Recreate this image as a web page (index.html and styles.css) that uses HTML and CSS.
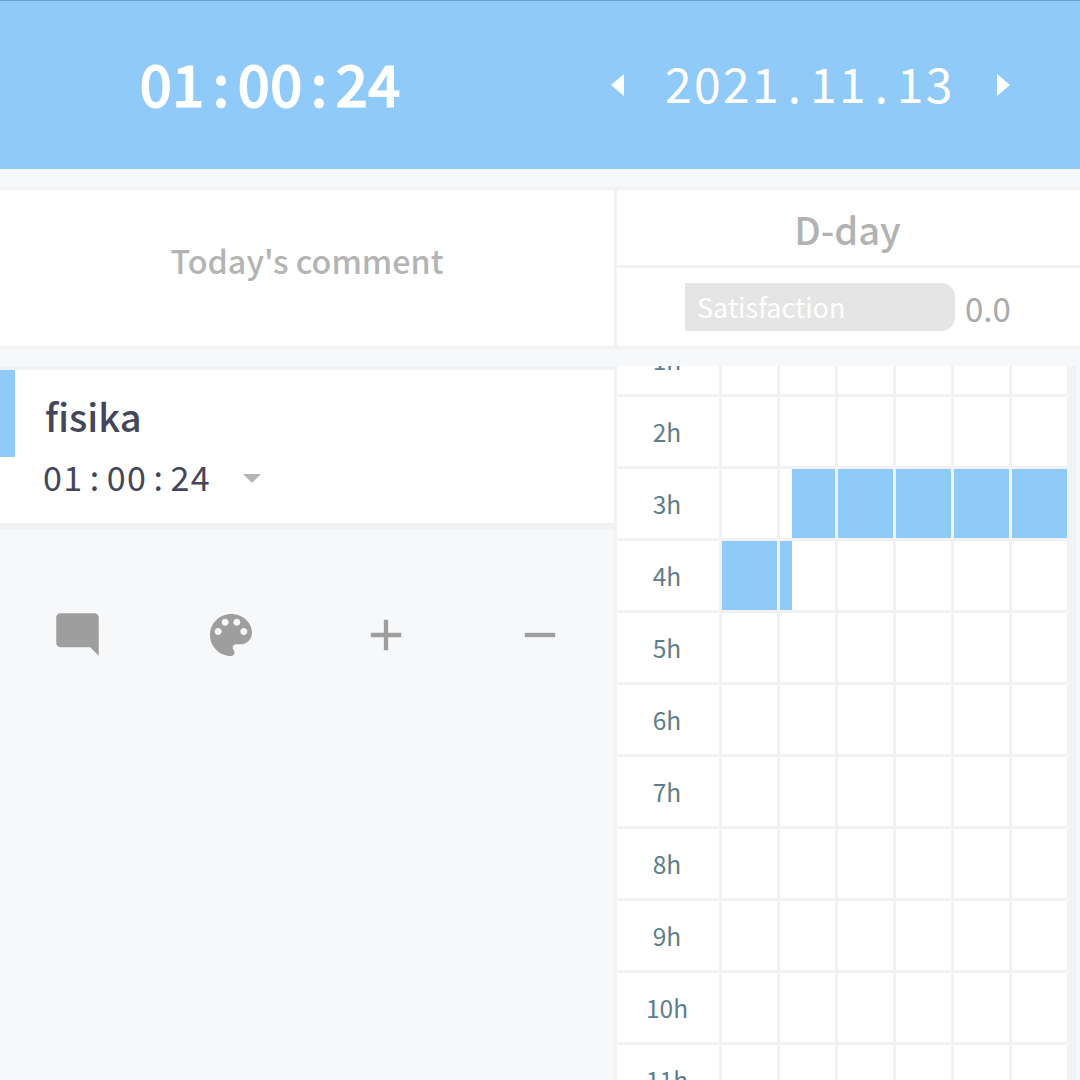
FILE: index.html
```html
<!DOCTYPE html>
<html lang="en">
<head>
    <meta charset="UTF-8">
    <meta name="viewport" content="width=device-width, initial-scale=1.0">
    <title>Study Timer</title>
    <link rel="stylesheet" href="styles.css">
</head>
<body>
    <header class="top-bar">
        <div class="total-time">01<span class="time-sep">:</span>00<span class="time-sep">:</span>24</div>
        <div class="date-nav">
            <span class="arrow arrow-left"></span>
            <span class="date-text">2021<span class="date-sep">.</span>11<span class="date-sep">.</span>13</span>
            <span class="arrow arrow-right"></span>
        </div>
    </header>

    <main class="content">
        <section class="left-col">
            <div class="comment-box">Today's comment</div>

            <div class="subject-card">
                <span class="subject-color"></span>
                <div class="subject-name">fisika</div>
                <div class="subject-row">
                    <span class="subject-time">01<span class="subject-sep">:</span>00<span class="subject-sep">:</span>24</span>
                    <span class="caret"></span>
                </div>
            </div>

            <div class="tools">
                <button class="tool bubble">
                    <svg viewBox="0 0 24 24" width="51" height="51"><path d="M21.99 4c0-1.1-.89-2-1.99-2H4c-1.1 0-2 .9-2 2v12c0 1.1.9 2 2 2h14l4 4-.01-18z"/></svg>
                </button>
                <button class="tool palette">
                    <svg viewBox="0 0 24 24" width="56" height="56"><path d="M12 3c-4.97 0-9 4.03-9 9s4.03 9 9 9c.83 0 1.5-.67 1.5-1.5 0-.39-.15-.74-.39-1.01-.24-.27-.39-.62-.39-.99 0-.83.67-1.5 1.5-1.5H16c2.76 0 5-2.24 5-5 0-4.42-4.03-8-9-8zm-5.5 9c-.83 0-1.5-.67-1.5-1.5S5.67 9 6.5 9 8 9.67 8 10.5 7.33 12 6.5 12zm3-4C8.67 8 8 7.33 8 6.5S8.67 5 9.5 5s1.5.67 1.5 1.5S10.33 8 9.5 8zm5 0c-.83 0-1.5-.67-1.5-1.5S13.67 5 14.5 5s1.5.67 1.5 1.5S15.33 8 14.5 8zm3 4c-.83 0-1.5-.67-1.5-1.5S16.67 9 17.5 9s1.5.67 1.5 1.5-.67 1.5-1.5 1.5z"/></svg>
                </button>
                <button class="tool">
                    <svg viewBox="0 0 24 24" width="52" height="52"><path d="M19 13h-6v6h-2v-6H5v-2h6V5h2v6h6v2z"/></svg>
                </button>
                <button class="tool">
                    <svg viewBox="0 0 24 24" width="52" height="52"><path d="M19 13H5v-2h14v2z"/></svg>
                </button>
            </div>
        </section>

        <section class="right-col">
            <div class="info-box">
                <div class="dday">D-day</div>
                <div class="satisfaction">
                    <div class="satisfaction-bar">Satisfaction</div>
                    <span class="satisfaction-value">0.0</span>
                </div>
            </div>

            <div class="timetable">
                <div class="timetable-inner">
                    <div class="hour-row"><div class="hour">1h</div><div class="cell"></div><div class="cell"></div><div class="cell"></div><div class="cell"></div><div class="cell"></div><div class="cell"></div></div>
                    <div class="hour-row"><div class="hour">2h</div><div class="cell"></div><div class="cell"></div><div class="cell"></div><div class="cell"></div><div class="cell"></div><div class="cell"></div></div>
                    <div class="hour-row">
                        <div class="hour">3h</div>
                        <div class="cell"></div>
                        <div class="cell cell-end"><span class="fill" style="width: 43px"></span></div>
                        <div class="cell"><span class="fill" style="width: 55px"></span></div>
                        <div class="cell"><span class="fill" style="width: 55px"></span></div>
                        <div class="cell"><span class="fill" style="width: 55px"></span></div>
                        <div class="cell"><span class="fill" style="width: 55px"></span></div>
                    </div>
                    <div class="hour-row">
                        <div class="hour">4h</div>
                        <div class="cell"><span class="fill" style="width: 55px"></span></div>
                        <div class="cell"><span class="fill" style="width: 12px"></span></div>
                        <div class="cell"></div>
                        <div class="cell"></div>
                        <div class="cell"></div>
                        <div class="cell"></div>
                    </div>
                    <div class="hour-row"><div class="hour">5h</div><div class="cell"></div><div class="cell"></div><div class="cell"></div><div class="cell"></div><div class="cell"></div><div class="cell"></div></div>
                    <div class="hour-row"><div class="hour">6h</div><div class="cell"></div><div class="cell"></div><div class="cell"></div><div class="cell"></div><div class="cell"></div><div class="cell"></div></div>
                    <div class="hour-row"><div class="hour">7h</div><div class="cell"></div><div class="cell"></div><div class="cell"></div><div class="cell"></div><div class="cell"></div><div class="cell"></div></div>
                    <div class="hour-row"><div class="hour">8h</div><div class="cell"></div><div class="cell"></div><div class="cell"></div><div class="cell"></div><div class="cell"></div><div class="cell"></div></div>
                    <div class="hour-row"><div class="hour">9h</div><div class="cell"></div><div class="cell"></div><div class="cell"></div><div class="cell"></div><div class="cell"></div><div class="cell"></div></div>
                    <div class="hour-row"><div class="hour">10h</div><div class="cell"></div><div class="cell"></div><div class="cell"></div><div class="cell"></div><div class="cell"></div><div class="cell"></div></div>
                    <div class="hour-row"><div class="hour">11h</div><div class="cell"></div><div class="cell"></div><div class="cell"></div><div class="cell"></div><div class="cell"></div><div class="cell"></div></div>
                </div>
            </div>
        </section>
    </main>
</body>
</html>
```

FILE: styles.css
```css
html, body {
    height: 100%;
}
body {
    margin: 0;
    height: 1080px;
    overflow: hidden;
    background-color: #f7f8fa;
    font-family: "Noto Sans CJK KR", "Noto Sans", sans-serif;
}
.top-bar {
    display: flex;
    height: 168px;
    align-items: center;
    background-color: #90caf9;
    border-top: 1px solid #6a9fd0;
    color: #ffffff;
}
.total-time {
    width: 540px;
    margin-top: -6px;
    text-align: center;
    font-size: 57px;
    font-weight: 500;
    line-height: 1;
    -webkit-text-stroke: 1px #ffffff;
}
.time-sep {
    margin: 0 8px;
}
.date-nav {
    display: flex;
    flex: 1;
    align-items: center;
    padding-left: 71px;
}
.date-text {
    margin: -7px 42px 0 41px;
    font-size: 48px;
    font-weight: 400;
    line-height: 1;
    letter-spacing: 2.4px;
}
.date-sep {
    margin: 0 6.5px;
}
.arrow {
    width: 0;
    height: 0;
    border-top: 11px solid transparent;
    border-bottom: 11px solid transparent;
}
.arrow-left {
    border-right: 13px solid #ffffff;
}
.arrow-right {
    border-left: 13px solid #ffffff;
}
.content {
    display: flex;
    padding-top: 18px;
}
.left-col {
    width: 614px;
}
.right-col {
    width: 466px;
}
.comment-box {
    display: flex;
    height: 140px;
    padding-bottom: 16px;
    align-items: center;
    justify-content: center;
    background-color: #ffffff;
    border-top: 3px solid #f1f2f4;
    border-bottom: 3px solid #f1f2f4;
    color: #b4b4b4;
    font-size: 32.3px;
    font-weight: 500;
}
.subject-card {
    position: relative;
    height: 153px;
    margin-top: 18px;
    background-color: #ffffff;
    border-top: 3px solid #f1f2f4;
    border-bottom: 6px solid #f1f2f4;
    color: #44465a;
}
.subject-color {
    position: absolute;
    top: 0;
    left: 0;
    width: 15px;
    height: 87px;
    background-color: #90caf9;
}
.subject-name {
    padding: 20px 0 0 45px;
    font-size: 38px;
    font-weight: 500;
    line-height: 52px;
}
.subject-row {
    display: flex;
    align-items: center;
    padding: 11px 0 0 43px;
    line-height: 48px;
}
.subject-time {
    font-size: 34px;
    letter-spacing: 1.5px;
}
.subject-sep {
    margin: 0 6px;
}
.caret {
    width: 0;
    height: 0;
    margin: 2px 0 0 32px;
    border-left: 9px solid transparent;
    border-right: 9px solid transparent;
    border-top: 9px solid #b5b5b5;
}
.tools {
    display: grid;
    grid-template-columns: repeat(4, 154px);
    height: 58px;
    margin-top: 77px;
    padding-left: 1px;
}
.tool {
    display: flex;
    align-items: center;
    justify-content: center;
    padding: 0;
    background: none;
    border: none;
    cursor: pointer;
}
.tool svg {
    fill: #9e9e9e;
}
.bubble {
    padding: 0 2px 2px 0;
}
.palette {
    padding-right: 2px;
}
.info-box {
    height: 156px;
    background-color: #ffffff;
    border-top: 3px solid #f1f2f4;
    border-bottom: 3px solid #f1f2f4;
    border-left: 3px solid #f1f2f4;
}
.dday {
    height: 75px;
    padding-right: 2px;
    border-bottom: 3px solid #f1f2f4;
    color: #b2b2b2;
    font-size: 38px;
    font-weight: 500;
    line-height: 78px;
    text-align: center;
}
.satisfaction {
    display: flex;
    align-items: center;
    padding: 15px 0 0 68px;
}
.satisfaction-bar {
    width: 270px;
    height: 48px;
    box-sizing: border-box;
    padding-left: 12px;
    background-color: #e5e5e5;
    border-radius: 0 14px 14px 0;
    color: #ffffff;
    font-size: 27px;
    line-height: 48px;
}
.satisfaction-value {
    margin: 2px 0 0 10px;
    color: #aaaaaa;
    font-size: 33px;
    line-height: 1;
}
.timetable {
    height: 714px;
    margin-top: 17px;
    overflow: hidden;
}
.timetable-inner {
    width: 456px;
    margin-top: -41px;
    background-color: #f1f2f4;
    border-left: 3px solid #f1f2f4;
    border-right: 3px solid #f1f2f4;
}
.hour-row {
    display: grid;
    grid-template-columns: 102px repeat(6, 55px);
    column-gap: 3px;
    height: 69px;
    padding-bottom: 3px;
}
.hour {
    box-sizing: border-box;
    padding-right: 2px;
    background-color: #ffffff;
    color: #607d8b;
    font-size: 24.5px;
    line-height: 69px;
    text-align: center;
}
.cell {
    display: flex;
    background-color: #ffffff;
}
.cell-end {
    justify-content: flex-end;
}
.fill {
    display: block;
    background-color: #90caf9;
}
```
